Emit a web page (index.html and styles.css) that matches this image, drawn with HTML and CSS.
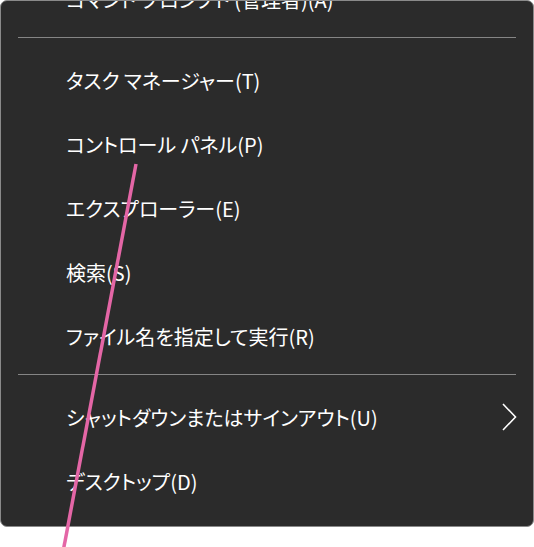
FILE: index.html
```html
<!DOCTYPE html>
<html lang="ja">
<head>
<meta charset="utf-8">
<link rel="stylesheet" href="styles.css">
</head>
<body>
<div class="menu">
  <div class="item first">コマンド プロンプト (管理者)(A)</div>
  <div class="sep"></div>
  <div class="item">タスク マネージャー(T)</div>
  <div class="item">コントロール パネル(P)</div>
  <div class="item">エクスプローラー(E)</div>
  <div class="item">検索(S)</div>
  <div class="item">ファイル名を指定して実行(R)</div>
  <div class="sep"></div>
  <div class="item sub">シャットダウンまたはサインアウト(U)
    <svg class="chev" width="16" height="28" viewBox="0 0 16 28"><path d="M2 1 L14.5 14 L2 27" fill="none" stroke="#ffffff" stroke-width="1.6"/></svg>
  </div>
  <div class="item">デスクトップ(D)</div>
</div>
<svg class="annot" width="534" height="547" viewBox="0 0 534 547"><line x1="136" y1="164" x2="63" y2="552" stroke="#e466a6" stroke-width="3.5"/></svg>
</body>
</html>
```

FILE: styles.css
```css
html, body {
  margin: 0;
  padding: 0;
  background: #ffffff;
}
body {
  width: 534px;
  height: 547px;
  position: relative;
  overflow: hidden;
  font-family: "Noto Sans CJK JP", "Noto Sans", sans-serif;
}
.menu {
  box-sizing: border-box;
  width: 534px;
  height: 527px;
  background: #2b2b2b;
  border: 1px solid #8a8a8a;
  border-radius: 7px;
  overflow: hidden;
  padding: 0 17px 0 17px;
}
.item {
  height: 64px;
  display: flex;
  align-items: center;
  padding-left: 48px;
  color: #ffffff;
  font-size: 20px;
  font-feature-settings: "palt";
  white-space: nowrap;
  position: relative;
}
.item.first {
  margin-top: -34px;
}
.sep {
  height: 1px;
  background: #858585;
  margin: 6px 0 10px 0;
}
.chev {
  position: absolute;
  right: -1px;
  top: 18px;
}
.annot {
  position: absolute;
  left: 0;
  top: 0;
  pointer-events: none;
}
```
